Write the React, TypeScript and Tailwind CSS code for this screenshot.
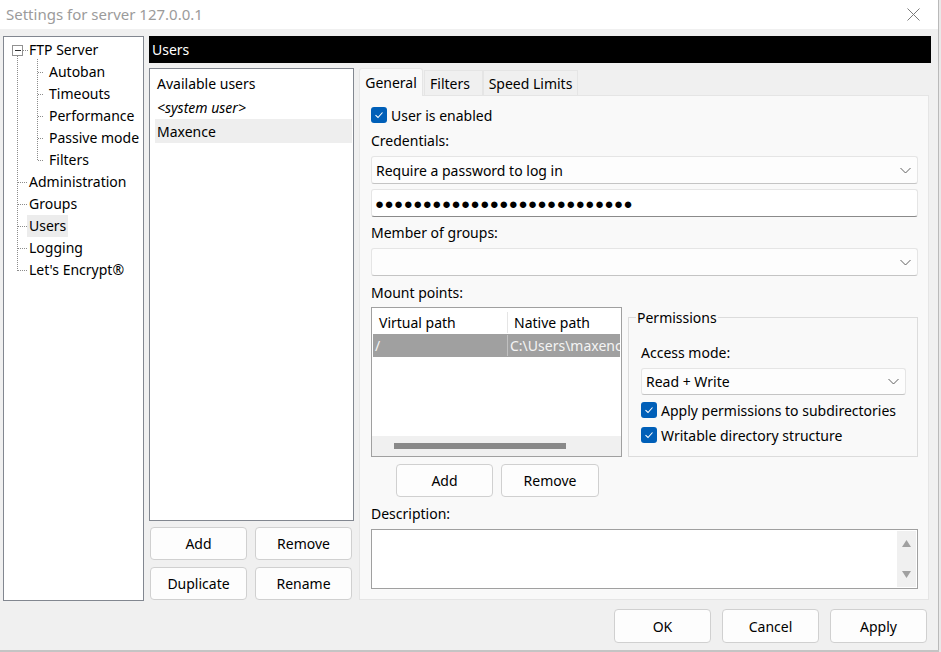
import React from "react";

const font = "font-['Noto_Sans','Open_Sans',sans-serif]";

function Check({ label }: { label: string }) {
  return (
    <div className="flex h-[20px] items-center gap-[4px]">
      <span className="flex h-[16px] w-[16px] items-center justify-center rounded-[3px] bg-[#005fb8]">
        <svg width="10" height="10" viewBox="0 0 10 10">
          <path d="M1.5 5.2 L4 7.5 L8.5 2.5" fill="none" stroke="white" strokeWidth="1.1" />
        </svg>
      </span>
      <span>{label}</span>
    </div>
  );
}

function Chevron() {
  return (
    <svg width="11" height="7" viewBox="0 0 11 7" className="shrink-0">
      <path d="M0.5 1 L5.5 6 L10.5 1" fill="none" stroke="#606060" strokeWidth="1" />
    </svg>
  );
}

function Select({ value, className }: { value?: string; className: string }) {
  return (
    <div
      className={`flex items-center justify-between rounded-[3px] border border-[#e5e5e5] border-b-[#c4c4c4] bg-[#fdfdfd] pl-[4px] pr-[6px] ${className}`}
    >
      <span>{value}</span>
      <Chevron />
    </div>
  );
}

function Btn({ label, className = "" }: { label: string; className?: string }) {
  return (
    <div
      className={`flex items-center justify-center rounded-[4px] border border-[#d0d0d0] bg-[#fdfdfd] ${className}`}
    >
      {label}
    </div>
  );
}

const tree: { label: string; indent: boolean; selected?: boolean }[] = [
  { label: "FTP Server", indent: false },
  { label: "Autoban", indent: true },
  { label: "Timeouts", indent: true },
  { label: "Performance", indent: true },
  { label: "Passive mode", indent: true },
  { label: "Filters", indent: true },
  { label: "Administration", indent: false },
  { label: "Groups", indent: false },
  { label: "Users", indent: false, selected: true },
  { label: "Logging", indent: false },
  { label: "Let's Encrypt®", indent: false },
];

function TreeLines() {
  const childYs = [35, 57, 79, 101, 123];
  const rootYs = [145, 167, 189, 211, 233];
  return (
    <svg className="pointer-events-none absolute left-0 top-0" width="40" height="240">
      <g stroke="#8c8c8c" strokeWidth="1" strokeDasharray="1 1" shapeRendering="crispEdges">
        <line x1="13.5" y1="19" x2="13.5" y2="234" />
        <line x1="33.5" y1="22" x2="33.5" y2="124" />
        <line x1="19" y1="13.5" x2="25" y2="13.5" />
        {childYs.map((y) => (
          <line key={y} x1="34" y1={y + 0.5} x2="43" y2={y + 0.5} />
        ))}
        {rootYs.map((y) => (
          <line key={y} x1="14" y1={y + 0.5} x2="23" y2={y + 0.5} />
        ))}
      </g>
      <rect x="8.5" y="8.5" width="10" height="10" fill="white" stroke="#919191" shapeRendering="crispEdges" />
      <line x1="11" y1="13.5" x2="17" y2="13.5" stroke="#333" shapeRendering="crispEdges" />
    </svg>
  );
}

export default function App() {
  return (
    <div className={`${font} relative h-[652px] w-[941px] overflow-hidden bg-[#e9e9e9] text-[14px] text-black`}>
      <div className="flex h-[650px] w-[939px] flex-col border-r border-[#b9b9b9] bg-[#f0f0f0]">
        {/* title bar */}
        <div className="flex h-[29px] items-center justify-between bg-white pl-[6px] pr-[18px]">
          <span className="text-[15px] text-[#9b9b9b]">Settings for server 127.0.0.1</span>
          <svg width="13" height="13" viewBox="0 0 13 13">
            <path d="M0.5 0.5 L12.5 12.5 M12.5 0.5 L0.5 12.5" stroke="#7a7a7a" strokeWidth="1" />
          </svg>
        </div>

        <div className="flex gap-[5px] pl-[3px] pt-[7px]">
          {/* tree */}
          <div className="relative h-[565px] w-[141px] border border-[#828790] bg-white pt-[2px]">
            <TreeLines />
            {tree.map((t) => (
              <div
                key={t.label}
                className={`flex h-[22px] items-center ${t.indent ? "pl-[43px]" : "pl-[23px]"}`}
              >
                <span className={`px-[2px] leading-[22px] ${t.selected ? "bg-[#ececec]" : ""}`}>{t.label}</span>
              </div>
            ))}
          </div>

          {/* right side */}
          <div className="flex w-[782px] flex-col">
            <div className="flex h-[27px] items-center bg-black pl-[3px] text-white">Users</div>
            <div className="mt-[5px] flex gap-[5px]">
              {/* users column */}
              <div className="flex w-[205px] flex-col">
                <div className="h-[453px] border border-[#828790] bg-white pl-[5px] pr-[1px] pt-[2px]">
                  <div className="flex h-[24px] items-center pl-[2px]">Available users</div>
                  <div className="flex h-[24px] items-center pl-[2px] italic">&lt;system user&gt;</div>
                  <div className="flex h-[24px] items-center bg-[#eeeeee] pl-[2px]">Maxence</div>
                </div>
                <div className="mt-[6px] flex gap-[8px] pl-[1px] pr-[2px]">
                  <Btn label="Add" className="h-[33px] flex-1" />
                  <Btn label="Remove" className="h-[33px] flex-1" />
                </div>
                <div className="mt-[7px] flex gap-[8px] pl-[1px] pr-[2px]">
                  <Btn label="Duplicate" className="h-[33px] flex-1" />
                  <Btn label="Rename" className="h-[33px] flex-1" />
                </div>
              </div>

              {/* tabs */}
              <div className="flex w-[570px] flex-col">
                <div className="flex h-[27px] items-end">
                  <div className="z-10 -mb-px flex h-[28px] w-[64px] items-start justify-center rounded-t-[3px] border border-b-0 border-[#e5e5e5] bg-[#f9f9f9] pt-[3px]">
                    General
                  </div>
                  <div className="ml-[1px] flex h-[25px] w-[59px] items-center border border-b-0 border-[#e5e5e5] bg-[#f0f0f0] pl-[5px]">
                    Filters
                  </div>
                  <div className="flex h-[25px] w-[95px] items-center justify-center border border-b-0 border-[#e5e5e5] bg-[#f0f0f0]">
                    Speed Limits
                  </div>
                </div>
                <div className="h-[505px] border border-[#e5e5e5] bg-[#f9f9f9] pl-[11px] pr-[10px] pt-[9px]">
                  <Check label="User is enabled" />
                  <div className="mt-[5px] flex h-[20px] items-center">Credentials:</div>
                  <Select value="Require a password to log in" className="mt-[6px] h-[28px]" />
                  <div className="mt-[5px] flex h-[28px] items-center rounded-[3px] border border-[#e5e5e5] border-b-[#8a8a8a] bg-white pl-[3px] text-[15px] leading-none tracking-[0.5px]">
                    {"●".repeat(27)}
                  </div>
                  <div className="mt-[5px] flex h-[20px] items-center">Member of groups:</div>
                  <Select className="mt-[6px] h-[28px]" />
                  <div className="mt-[6px] flex h-[20px] items-center">Mount points:</div>

                  <div className="mt-[5px] flex gap-[6px]">
                    <div className="flex h-[150px] w-[251px] flex-col border border-[#a0a0a0] bg-white">
                      <div className="mt-[2px] flex h-[24px] items-center">
                        <span className="w-[136px] border-r border-[#e5e5e5] pl-[7px]">Virtual path</span>
                        <span className="pl-[6px]">Native path</span>
                      </div>
                      <div className="mx-[1px] flex h-[23px] items-center overflow-hidden whitespace-nowrap bg-[#a0a0a0] text-[#f4f4f4]">
                        <span className="w-[135px] shrink-0 border-r border-[#c0c0c0] pl-[2px]">/</span>
                        <span className="pl-[2px]">C:\Users\maxence</span>
                      </div>
                      <div className="flex-1" />
                      <div className="flex h-[20px] items-center bg-[#f0f0f0] pl-[22px]">
                        <div className="h-[6px] w-[172px] bg-[#898989]" />
                      </div>
                    </div>

                    <div className="relative mt-[10px] h-[140px] w-[290px] border border-[#dcdcdc] px-[12px] pt-[24px]">
                      <span className="absolute -top-[11px] left-[7px] bg-[#f9f9f9] px-[1px]">Permissions</span>
                      <div className="flex h-[20px] items-center">Access mode:</div>
                      <Select value="Read + Write" className="mt-[6px] h-[27px] w-[265px]" />
                      <div className="mt-[5px]">
                        <Check label="Apply permissions to subdirectories" />
                      </div>
                      <div className="mt-[5px]">
                        <Check label="Writable directory structure" />
                      </div>
                    </div>
                  </div>

                  <div className="mt-[7px] flex gap-[8px] pl-[25px]">
                    <Btn label="Add" className="h-[33px] w-[97px]" />
                    <Btn label="Remove" className="h-[33px] w-[98px]" />
                  </div>
                  <div className="mt-[6px] flex h-[20px] items-center">Description:</div>
                  <div className="mt-[6px] flex h-[60px] justify-end border border-[#a0a0a0] bg-white p-[1px]">
                    <div className="flex w-[19px] flex-col items-center justify-between bg-[#f0f0f0] py-[9px]">
                      <svg width="9" height="7" viewBox="0 0 9 7">
                        <path d="M4.5 0 L9 7 L0 7 Z" fill="#a0a0a0" />
                      </svg>
                      <svg width="9" height="7" viewBox="0 0 9 7">
                        <path d="M0 0 L9 0 L4.5 7 Z" fill="#a0a0a0" />
                      </svg>
                    </div>
                  </div>
                </div>
              </div>
            </div>
          </div>
        </div>

        {/* dialog buttons */}
        <div className="mt-[8px] flex justify-end gap-[11px] pr-[11px]">
          <Btn label="OK" className="h-[34px] w-[97px]" />
          <Btn label="Cancel" className="h-[34px] w-[97px]" />
          <Btn label="Apply" className="h-[34px] w-[97px]" />
        </div>
      </div>
      <div className="h-[2px] w-[939px] bg-[#c4c4c4]" />
    </div>
  );
}
